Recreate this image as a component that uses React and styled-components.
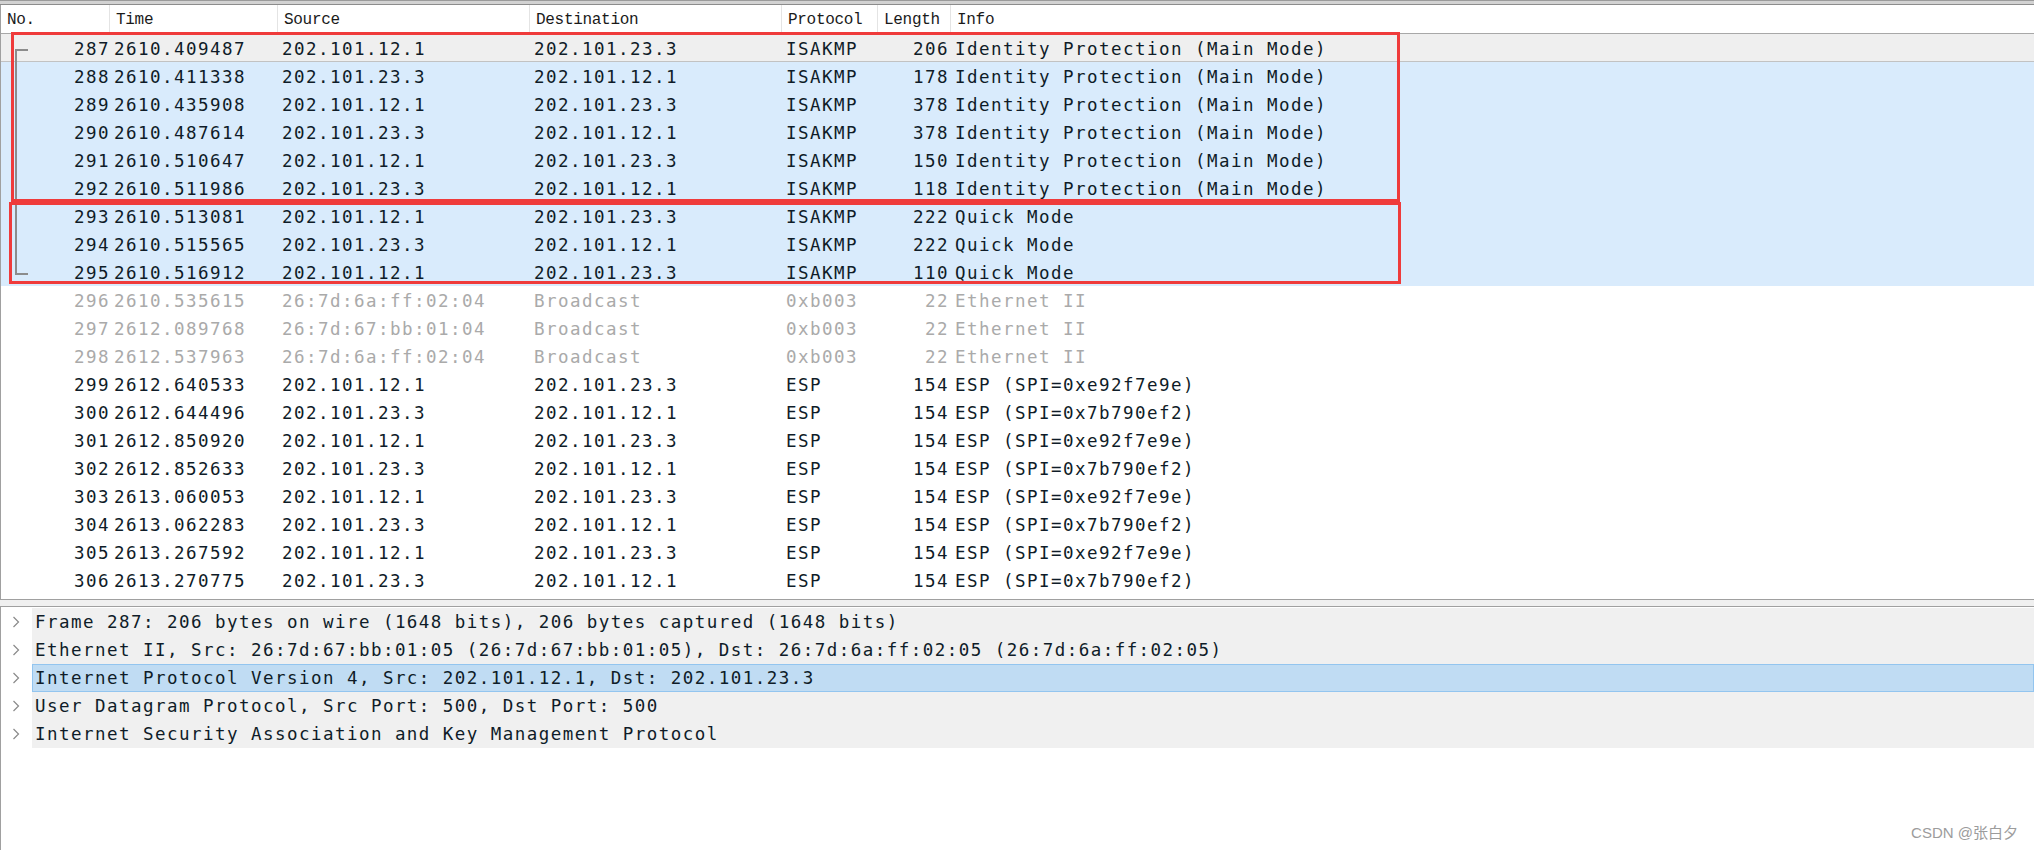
import React from 'react';
import styled, { createGlobalStyle, css } from 'styled-components';

const mono = `"DejaVu Sans Mono", "Liberation Mono", monospace`;
const COLS = '109px 168px 252px 252px 96px 73px 1fr';

const GlobalStyle = createGlobalStyle`
  html, body {
    margin: 0;
    padding: 0;
    background: #fff;
  }
  #root {
    width: 2034px;
    height: 850px;
    overflow: hidden;
  }
`;

const Window = styled.div`
  position: relative;
  width: 2034px;
  height: 850px;
  display: flex;
  flex-direction: column;
  background: #fff;
`;

const TopStrip = styled.div`
  height: 5px;
  box-sizing: border-box;
  background: #d2d2d2;
  border-top: 1px solid #9a9a9a;
  border-bottom: 1px solid #8c8c8c;
`;

const PacketList = styled.div`
  position: relative;
  height: 595px;
  box-sizing: border-box;
  border-left: 1px solid #a0a0a0;
  border-bottom: 1px solid #a0a0a0;
  overflow: hidden;
`;

const HeaderRow = styled.div`
  display: grid;
  grid-template-columns: ${COLS};
  height: 29px;
  box-sizing: border-box;
  border-bottom: 1px solid #a8a8a8;
`;

const HeaderCell = styled.div`
  padding-left: 6px;
  border-right: 1px solid #e4e4e4;
  font-family: "Liberation Mono", monospace;
  font-size: 16px;
  letter-spacing: -0.3px;
  line-height: 30px;
  height: 28px;
  overflow: hidden;
  color: #1a1a1a;
  white-space: nowrap;
  &:last-child {
    border-right: none;
  }
`;

const Row = styled.div`
  display: grid;
  grid-template-columns: ${COLS};
  height: 28px;
  font-family: ${mono};
  font-size: 17.5px;
  letter-spacing: 1.46px;
  line-height: 30px;
  white-space: pre;
  color: ${(p) => (p.$dim ? '#aaaaaa' : '#0f1c28')};
  background: ${(p) =>
    p.$tone === 'sel' ? '#efefef' : p.$tone === 'blue' ? '#d9ebfc' : '#fff'};
  ${(p) =>
    p.$tone === 'sel' &&
    css`
      box-shadow: inset 0 -1px 0 #c2c2c2;
    `}
`;

const Cell = styled.div`
  position: relative;
  height: 28px;
  overflow: hidden;
  text-align: ${(p) => (p.$right ? 'right' : 'left')};
  padding: ${(p) => (p.$right ? '0' : '0 0 0 4px')};
`;

const LenCell = styled(Cell)`
  padding-right: 2px;
`;

const RelMark = styled.span`
  position: absolute;
  left: 14px;
  top: 0;
  width: 2px;
  height: 28px;
  background: #8c8c8c;
  ${(p) =>
    p.$kind === 'first' &&
    css`
      top: 15px;
      height: 13px;
    `}
  ${(p) =>
    p.$kind === 'last' &&
    css`
      height: 17px;
    `}
  &::after {
    content: '';
    display: ${(p) => (p.$kind === 'mid' ? 'none' : 'block')};
    position: absolute;
    left: 0;
    top: ${(p) => (p.$kind === 'first' ? '0' : '15px')};
    width: 13px;
    height: 2px;
    background: #8c8c8c;
  }
`;

const RedBox = styled.div`
  position: absolute;
  box-sizing: border-box;
  border: 3px solid #ef3b3b;
  pointer-events: none;
`;

const Splitter = styled.div`
  height: 6px;
  background: #f0f0f0;
`;

const DetailPane = styled.div`
  flex: 1;
  box-sizing: border-box;
  border-top: 1px solid #a0a0a0;
  border-left: 1px solid #a0a0a0;
  padding-top: 1px;
  display: flex;
  flex-direction: column;
`;

const DetailRow = styled.div`
  display: flex;
  height: 28px;
`;

const Toggle = styled.div`
  width: 31px;
  padding-left: 11px;
  box-sizing: border-box;
  display: flex;
  align-items: center;
  background: #fff;
`;

const DetailText = styled.div`
  flex: 1;
  box-sizing: border-box;
  padding-left: 3px;
  font-family: ${mono};
  font-size: 17.5px;
  letter-spacing: 1.46px;
  line-height: 28px;
  white-space: pre;
  color: #0f1c28;
  background: ${(p) => (p.$active ? '#c0dcf3' : '#f0f0f0')};
  ${(p) =>
    p.$active &&
    css`
      box-shadow: inset 0 0 0 1px #93c5ef;
    `}
`;

const Watermark = styled.div`
  position: absolute;
  right: 16px;
  bottom: 7px;
  font-family: "Liberation Sans", "Noto Sans CJK SC", sans-serif;
  font-size: 15px;
  line-height: 20px;
  color: #9c9c9c;
`;

const columns = ['No.', 'Time', 'Source', 'Destination', 'Protocol', 'Length', 'Info'];

const A = '202.101.12.1';
const B = '202.101.23.3';
const MM = 'Identity Protection (Main Mode)';
const QM = 'Quick Mode';
const E1 = 'ESP (SPI=0xe92f7e9e)';
const E2 = 'ESP (SPI=0x7b790ef2)';

const packets = [
  { no: 287, t: '2610.409487', src: A, dst: B, proto: 'ISAKMP', len: 206, info: MM, tone: 'sel', rel: 'first' },
  { no: 288, t: '2610.411338', src: B, dst: A, proto: 'ISAKMP', len: 178, info: MM, tone: 'blue', rel: 'mid' },
  { no: 289, t: '2610.435908', src: A, dst: B, proto: 'ISAKMP', len: 378, info: MM, tone: 'blue', rel: 'mid' },
  { no: 290, t: '2610.487614', src: B, dst: A, proto: 'ISAKMP', len: 378, info: MM, tone: 'blue', rel: 'mid' },
  { no: 291, t: '2610.510647', src: A, dst: B, proto: 'ISAKMP', len: 150, info: MM, tone: 'blue', rel: 'mid' },
  { no: 292, t: '2610.511986', src: B, dst: A, proto: 'ISAKMP', len: 118, info: MM, tone: 'blue', rel: 'mid' },
  { no: 293, t: '2610.513081', src: A, dst: B, proto: 'ISAKMP', len: 222, info: QM, tone: 'blue', rel: 'mid' },
  { no: 294, t: '2610.515565', src: B, dst: A, proto: 'ISAKMP', len: 222, info: QM, tone: 'blue', rel: 'mid' },
  { no: 295, t: '2610.516912', src: A, dst: B, proto: 'ISAKMP', len: 110, info: QM, tone: 'blue', rel: 'last' },
  { no: 296, t: '2610.535615', src: '26:7d:6a:ff:02:04', dst: 'Broadcast', proto: '0xb003', len: 22, info: 'Ethernet II', dim: true },
  { no: 297, t: '2612.089768', src: '26:7d:67:bb:01:04', dst: 'Broadcast', proto: '0xb003', len: 22, info: 'Ethernet II', dim: true },
  { no: 298, t: '2612.537963', src: '26:7d:6a:ff:02:04', dst: 'Broadcast', proto: '0xb003', len: 22, info: 'Ethernet II', dim: true },
  { no: 299, t: '2612.640533', src: A, dst: B, proto: 'ESP', len: 154, info: E1 },
  { no: 300, t: '2612.644496', src: B, dst: A, proto: 'ESP', len: 154, info: E2 },
  { no: 301, t: '2612.850920', src: A, dst: B, proto: 'ESP', len: 154, info: E1 },
  { no: 302, t: '2612.852633', src: B, dst: A, proto: 'ESP', len: 154, info: E2 },
  { no: 303, t: '2613.060053', src: A, dst: B, proto: 'ESP', len: 154, info: E1 },
  { no: 304, t: '2613.062283', src: B, dst: A, proto: 'ESP', len: 154, info: E2 },
  { no: 305, t: '2613.267592', src: A, dst: B, proto: 'ESP', len: 154, info: E1 },
  { no: 306, t: '2613.270775', src: B, dst: A, proto: 'ESP', len: 154, info: E2 },
];

const details = [
  { text: 'Frame 287: 206 bytes on wire (1648 bits), 206 bytes captured (1648 bits)' },
  { text: 'Ethernet II, Src: 26:7d:67:bb:01:05 (26:7d:67:bb:01:05), Dst: 26:7d:6a:ff:02:05 (26:7d:6a:ff:02:05)' },
  { text: 'Internet Protocol Version 4, Src: 202.101.12.1, Dst: 202.101.23.3', active: true },
  { text: 'User Datagram Protocol, Src Port: 500, Dst Port: 500' },
  { text: 'Internet Security Association and Key Management Protocol' },
];

function Chevron() {
  return (
    <svg width="8" height="12" viewBox="0 0 8 12">
      <polyline points="1.5,1 6.5,6 1.5,11" fill="none" stroke="#8a8a8a" strokeWidth="1.2" />
    </svg>
  );
}

export default function App() {
  return (
    <Window>
      <GlobalStyle />
      <TopStrip />
      <PacketList>
        <HeaderRow>
          {columns.map((c) => (
            <HeaderCell key={c}>{c}</HeaderCell>
          ))}
        </HeaderRow>
        {packets.map((p) => (
          <Row key={p.no} $tone={p.tone} $dim={p.dim}>
            <Cell $right>
              {p.rel && <RelMark $kind={p.rel} />}
              {p.no}
            </Cell>
            <Cell>{p.t}</Cell>
            <Cell>{p.src}</Cell>
            <Cell>{p.dst}</Cell>
            <Cell>{p.proto}</Cell>
            <LenCell $right>{p.len}</LenCell>
            <Cell>{p.info}</Cell>
          </Row>
        ))}
        <RedBox style={{ left: 10, top: 27, width: 1389, height: 170 }} />
        <RedBox style={{ left: 8, top: 197, width: 1392, height: 82 }} />
      </PacketList>
      <Splitter />
      <DetailPane>
        {details.map((d) => (
          <DetailRow key={d.text}>
            <Toggle>
              <Chevron />
            </Toggle>
            <DetailText $active={d.active}>{d.text}</DetailText>
          </DetailRow>
        ))}
      </DetailPane>
      <Watermark>CSDN @张白夕</Watermark>
    </Window>
  );
}
